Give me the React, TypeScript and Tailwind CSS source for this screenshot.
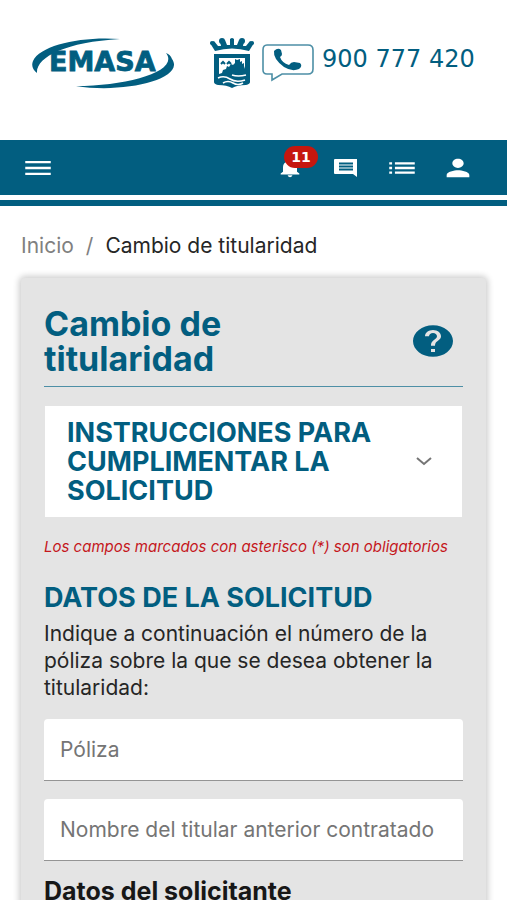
import React, { useState } from 'react';
import { MdHelp, MdList, MdMenu, MdNotifications, MdPerson } from 'react-icons/md';

const EmasaLogo = () => (
    <svg viewBox="0 0 142 52" className="w-[142px] h-[52px]" role="img" aria-label="EMASA">
        <path d="M88 2 C50 -1 8 8 1 24 C-1 29 1 33 5 36 C4 20 34 5 88 2 Z" fill="#025e80" />
        <path d="M134 16 C148 34 96 49 44 49 C92 57 154 42 140 22 C139 19 137 17 134 16 Z" fill="#025e80" />
        <text x="17" y="34" fill="#025e80" stroke="#025e80" strokeWidth="0.8" fontSize="27" fontWeight="700" fontFamily="'DejaVu Sans', sans-serif">EMASA</text>
    </svg>
);

const CrestIcon = () => (
    <svg viewBox="0 0 44 50" className="w-11 h-[50px]" aria-hidden="true">
        <g fill="#025e80">
            <path d="M5 13 L0 5 L4 3 L8 8 L11 8 L10 3 L15 2 L17 7 L20 7 L20 1 L24 1 L24 7 L27 7 L29 2 L34 3 L33 8 L36 8 L40 3 L44 5 L39 13 Q22 8 5 13 Z" />
            <circle cx="2" cy="5" r="2" />
            <circle cx="12" cy="3" r="3" />
            <circle cx="22" cy="2" r="2" />
            <circle cx="32" cy="3" r="3" />
            <circle cx="42" cy="5" r="2" />
            <path d="M4 16 H40 V44 Q40 46 36 47 Q27 47 22 50 Q17 47 8 47 Q4 46 4 44 Z" />
        </g>
        <path d="M5 15 Q22 11 39 15" stroke="#fff" strokeWidth="1" fill="none" />
        <path d="M9 20 H35 V31 L34 28 V25 L32 26 V23 L30 24 V21 L27 22 L25 21 V25 L23 27 L21 26 L19 29 L17 28 L16 31 L13 32 L12 35 L9 36 Z" fill="#fff" />
        <path d="M11 26 l2-2 l2 2 M17 26 l2-2 l2 2" stroke="#025e80" strokeWidth="2" fill="none" />
        <path d="M8 40 Q14 37 20 41 T35 42 M13 45 Q18 42 23 45 T33 45 M22 37 Q28 39 36 37" stroke="#fff" strokeWidth="1.6" fill="none" />
    </svg>
);

const PhoneBubbleIcon = () => (
    <svg viewBox="0 0 52 38" className="w-[52px] h-[38px]" aria-hidden="true">
        <path d="M5 1 H46 Q51 1 51 6 V25 Q51 30 46 30 H20 L10 36 V30 H5 Q1 30 1 26 V6 Q1 1 5 1 Z" fill="none" stroke="#4d8fa6" strokeWidth="1.6" />
        <path d="M12 7 Q16 3 19 6 L20 10 Q20 12 18 13 Q20 19 27 21 Q29 18 32 18 L38 19 Q41 22 37 25 Q30 28 22 23 Q11 15 12 7 Z" fill="#025e80" />
    </svg>
);

const CommentIcon = () => (
    <svg viewBox="0 0 24 18" className="w-6 h-[18px]" aria-hidden="true">
        <path d="M1 0 H23 V18 L19 15 H1 Q0 15 0 14 V1 Q0 0 1 0 Z" fill="currentColor" />
        <path d="M5 4.5 H19 M5 7.5 H19 M5 10.5 H19" stroke="#025e80" strokeWidth="1.8" />
    </svg>
);

interface NavButtonProps {
    label: string;
    children: React.ReactNode;
}

const NavButton: React.FC<NavButtonProps> = ({ label, children }) => (
    <button type="button" aria-label={label} className="relative flex h-full w-14 items-center justify-center text-white">
        {children}
    </button>
);

const Header = () => (
    <header>
        <div className="flex h-[140px] items-start px-8 pt-9">
            <a href="#inicio" className="mt-px"><EmasaLogo /></a>
            <span className="ml-9 mt-0.5"><CrestIcon /></span>
            <a href="tel:900777420" className="ml-2 mt-2 flex items-start gap-2 text-2xl leading-[30px] text-[#025e80] whitespace-nowrap font-['DejaVu_Sans',sans-serif]">
                <PhoneBubbleIcon />
                900 777 420
            </a>
        </div>
        <nav className="flex h-[55px] items-center justify-between bg-[#025e80] px-[21px]">
            <button type="button" aria-label="Menú" className="text-white">
                <MdMenu className="w-[34px] h-7" preserveAspectRatio="none" />
            </button>
            <div className="flex h-full">
                <NavButton label="Notificaciones">
                    <MdNotifications className="w-7 h-[22px]" preserveAspectRatio="none" />
                    <span className="absolute left-[22px] top-1.5 flex h-[22px] w-[34px] items-center justify-center rounded-full bg-[#c5170f] text-sm font-bold font-['DejaVu_Sans',sans-serif]">11</span>
                </NavButton>
                <NavButton label="Mensajes"><CommentIcon /></NavButton>
                <NavButton label="Listado"><MdList className="w-[34px] h-7" preserveAspectRatio="none" /></NavButton>
                <NavButton label="Usuario"><MdPerson className="w-[34px] h-7" preserveAspectRatio="none" /></NavButton>
            </div>
        </nav>
        <div className="mt-[5px] h-1.5 bg-[#025e80]" />
    </header>
);

interface FieldProps {
    id: string;
    label: string;
}

// The label sits over the empty box and moves up once there is a value or focus
const Field: React.FC<FieldProps> = ({ id, label }) => (
    <div className="relative">
        <input
            id={id}
            type="text"
            placeholder=" "
            className="peer block h-[62px] w-full rounded-t border-b border-[#949494] bg-white px-4 pt-4 text-[21px] focus:outline-none focus:border-[#025e80]"
        />
        <label
            htmlFor={id}
            className="pointer-events-none absolute left-4 top-1 text-sm text-[#757575] peer-placeholder-shown:top-4 peer-placeholder-shown:text-[21px] peer-placeholder-shown:leading-[30px] peer-focus:top-1 peer-focus:text-sm whitespace-nowrap"
        >
            {label}
        </label>
    </div>
);

const App: React.FC = () => {
    const [open, setOpen] = useState(false);

    return (
        <div className="min-h-screen bg-white font-[Inter,sans-serif] text-neutral-800">
            <Header />
            <main className="px-[21px] pb-8">
                <nav aria-label="Ruta" className="flex gap-3 pt-[26px] text-[21px] leading-7">
                    <a href="#inicio" className="text-[#808080]">Inicio</a>
                    <span className="text-[#808080]">/</span>
                    <span>Cambio de titularidad</span>
                </nav>

                <section className="mt-[18px] rounded bg-[#e4e4e4] px-[23px] pt-7 pb-6 shadow-[0_0_6px_2px_rgba(0,0,0,0.2)]">
                    <div className="flex items-center justify-between border-b border-[#4d8fa6] pb-2.5">
                        <h1 className="max-w-64 text-[34px] leading-[35px] font-bold text-[#025e80]">Cambio de titularidad</h1>
                        <button type="button" aria-label="Ayuda" className="mr-1.5 text-[#025e80]">
                            <MdHelp className="w-12 h-[38px]" preserveAspectRatio="none" />
                        </button>
                    </div>

                    <div className="mx-px mt-[19px] bg-white">
                        <button
                            type="button"
                            aria-expanded={open}
                            onClick={() => setOpen(!open)}
                            className="flex w-full items-center justify-between px-[22px] py-3 text-left"
                        >
                            <span className="max-w-80 text-[27px] leading-[29px] font-bold text-[#025e80]">INSTRUCCIONES PARA CUMPLIMENTAR LA SOLICITUD</span>
                            <svg viewBox="0 0 16 9" className="mr-2 w-4 h-[9px]" aria-hidden="true">
                                <path d="M1 1 L8 7 L15 1" fill="none" stroke="#757575" strokeWidth="2" />
                            </svg>
                        </button>
                    </div>

                    <p className="mt-[18px] text-[15px] leading-6 italic text-[#c5171c] whitespace-nowrap">Los campos marcados con asterisco (*) son obligatorios</p>

                    <h2 className="mt-6 text-[27px] leading-[29px] font-bold text-[#025e80]">DATOS DE LA SOLICITUD</h2>
                    <p className="mt-2 text-[21px] leading-[27px]">
                        Indique a continuación el número de la póliza sobre la que se desea obtener la titularidad:
                    </p>

                    <div className="mt-[18px] flex flex-col gap-[18px]">
                        <Field id="poliza" label="Póliza" />
                        <Field id="titular" label="Nombre del titular anterior contratado" />
                    </div>

                    <h2 className="mt-4 text-[25px] leading-[29px] font-bold text-neutral-900">Datos del solicitante</h2>
                </section>
            </main>
        </div>
    );
};

export default App;
